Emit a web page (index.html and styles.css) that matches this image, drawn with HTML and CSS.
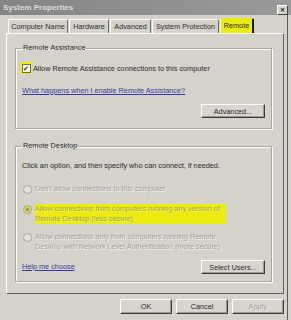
FILE: index.html
```html
<!DOCTYPE html>
<html lang="en">
    <head>
        <meta charset="UTF-8">
        <title>System Properties</title>
        <link rel="stylesheet" href="styles.css">
    </head>
    <body>
        <div class="window">
            <div class="titlebar">
                <span class="title">System Properties</span>
                <span class="close">&#x2715;</span>
            </div>
            <div class="tabs">
                <div class="tab" style="width: 60px">Computer Name</div>
                <div class="tab" style="width: 40px">Hardware</div>
                <div class="tab" style="width: 41px">Advanced</div>
                <div class="tab" style="width: 67px">System Protection</div>
                <div class="tab active" style="width: 34px">Remote</div>
            </div>
            <div class="panel">
                <fieldset class="group assist">
                    <legend>Remote Assistance</legend>
                    <div class="check-row">
                        <span class="check-mark"><span class="checkbox">&#x2714;</span></span>
                        <span>Allow Remote Assistance connections to this computer</span>
                    </div>
                    <a class="link first-link" href="#">What happens when I enable Remote Assistance?</a>
                    <div class="button-row">
                        <button class="btn">Advanced...</button>
                    </div>
                </fieldset>
                <fieldset class="group desktop">
                    <legend>Remote Desktop</legend>
                    <p class="intro">Click an option, and then specify who can connect, if needed.</p>
                    <div class="radio-row r1">
                        <span class="radio"></span>
                        <span class="disabled">Don't allow connections to this computer</span>
                    </div>
                    <div class="radio-row r2">
                        <span class="radio checked"></span>
                        <span class="disabled marked">Allow connections from computers running any version of<br>Remote Desktop (less secure)</span>
                    </div>
                    <div class="radio-row r3">
                        <span class="radio"></span>
                        <span class="disabled">Allow connections only from computers running Remote<br>Desktop with Network Level Authentication (more secure)</span>
                    </div>
                    <div class="help-row">
                        <a class="link" href="#">Help me choose</a>
                        <button class="btn">Select Users...</button>
                    </div>
                </fieldset>
            </div>
            <div class="footer">
                <button class="btn foot">OK</button>
                <button class="btn foot">Cancel</button>
                <button class="btn foot off">Apply</button>
            </div>
        </div>
    </body>
</html>
```

FILE: styles.css
```css
html, body { margin: 0; padding: 0; }
* { font-family: 'Liberation Sans', Arial, sans-serif; box-sizing: border-box; }
body {
    width: 291px;
    height: 320px;
    background-color: #d5d2cb;
    color: #2a2a2a;
    font-size: 7.3px;
    overflow: hidden;
}
.window {
    width: 291px;
    height: 320px;
    box-shadow: inset -3px 0 0 #d5d2cb, inset -4px 0 0 #5a5a5a;
}
.titlebar {
    height: 15px;
    background: linear-gradient(to right, #858585, #9a9a9a);
    display: flex;
    align-items: center;
    justify-content: space-between;
    padding: 0 3px 0 3px;
}
.title {
    color: #dcdcdc;
    font-weight: bold;
    font-size: 8px;
}
.close {
    width: 11px;
    height: 10px;
    margin-top: 4px;
    background: #d8d5ce;
    border: 1px solid #fff;
    border-right-color: #404040;
    border-bottom-color: #404040;
    font-size: 6px;
    line-height: 8px;
    text-align: center;
    color: #111;
    font-weight: bold;
}
.tabs {
    display: flex;
    margin: 4px 0 0 8px;
    height: 14px;
    position: relative;
    z-index: 1;
}
.tab {
    height: 14px;
    margin-right: 1px;
    border-top: 1px solid #fff;
    border-left: 1px solid #fff;
    border-right: 1px solid #6e6e6e;
    border-radius: 2px 2px 0 0;
    text-align: center;
    line-height: 13px;
    white-space: nowrap;
}
.tab.active {
    background-color: #eaeb10;
    height: 15px;
    margin-top: -1px;
    border-right: 2px solid #1a1a1a;
    border-top-color: #eaeb10;
}
.panel {
    width: 278px;
    height: 261px;
    margin-left: 6px;
    border: 1px solid #fff;
    border-right-color: #5f5f5f;
    border-bottom-color: #5f5f5f;
    padding: 9px 0 0 8px;
}
.group {
    width: 257px;
    margin: 0;
    padding: 0 6px 0 6px;
    border: 1px solid #a9a59c;
    box-shadow: inset 1px 1px 0 #fff, 1px 1px 0 #fff;
}
.group legend {
    padding: 0 1px;
    line-height: 10px;
}
.assist { padding-bottom: 10px; }
.desktop { margin-top: 12px; padding-bottom: 7px; }
.check-row {
    display: flex;
    align-items: center;
    margin-top: 9px;
    height: 12px;
}
.check-mark {
    background-color: #eaeb10;
    width: 12px;
    height: 12px;
    display: flex;
    align-items: center;
    justify-content: center;
    margin-right: 1px;
    margin-left: -2px;
}
.checkbox {
    width: 9px;
    height: 9px;
    background: #f4f4f0;
    border: 1px solid #6a6a6a;
    font-size: 7px;
    line-height: 7px;
    text-align: center;
    color: #1f4e1f;
}
.link {
    display: block;
    color: #3b3ba0;
    text-decoration: underline;
    line-height: 10px;
    width: max-content;
}
.first-link { margin-top: 12px; }
.button-row {
    display: flex;
    justify-content: flex-end;
    margin-top: 8px;
}
.btn {
    width: 64px;
    height: 14px;
    padding: 0;
    background-color: #d8d5ce;
    border: 1px solid #fff;
    border-right-color: #3a3a3a;
    border-bottom-color: #3a3a3a;
    box-shadow: inset -1px -1px 0 #9c9990;
    font-size: 7.3px;
    color: #2a2a2a;
}
.intro {
    margin: 10px 0 0 0;
    line-height: 10px;
}
.radio-row {
    display: flex;
    align-items: flex-start;
    line-height: 10px;
}
.r1 { margin-top: 13px; }
.r2 { margin-top: 10px; }
.r3 { margin-top: 8px; }
.radio {
    width: 9px;
    height: 9px;
    border-radius: 50%;
    border: 1px solid #a8a59e;
    background: #e4e2dc;
    margin: 1px 3px 0 1px;
    flex-shrink: 0;
    display: flex;
    align-items: center;
    justify-content: center;
}
.radio.checked::after {
    content: "";
    width: 3px;
    height: 3px;
    border-radius: 50%;
    background: #8a887f;
}
.r2 .radio { background: #d8d94a; }
.disabled {
    color: #a3a09a;
    text-shadow: 1px 1px 0 #f4f3f0;
}
.marked {
    background-color: #eaeb10;
    color: #a3a340;
    text-shadow: 1px 1px 0 #f5f580;
    padding-right: 6px;
}
.help-row {
    display: flex;
    justify-content: space-between;
    align-items: center;
    margin-top: 8px;
}
.footer {
    display: flex;
    justify-content: flex-end;
    gap: 4px;
    margin-top: 5px;
    padding-right: 7px;
}
.btn.foot {
    width: 52px;
    height: 15px;
}
.btn.off {
    color: #a3a09a;
    text-shadow: 1px 1px 0 #f4f3f0;
}
```
